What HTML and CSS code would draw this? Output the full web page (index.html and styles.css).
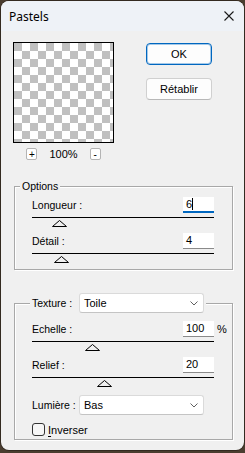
FILE: index.html
```html
<!DOCTYPE html>
<html lang="fr">
<head>
<meta charset="utf-8">
<title>Pastels</title>
<link rel="stylesheet" href="styles.css">
</head>
<body>
<div class="window">
  <div class="titlebar">
    <span class="title">Pastels</span>
    <svg class="close" width="10" height="10" viewBox="0 0 10 10"><path d="M0.5 0.5L9.5 9.5M9.5 0.5L0.5 9.5" stroke="#1a1a1a" stroke-width="1.1" fill="none"/></svg>
  </div>
  <div class="content">
    <div class="top">
      <div class="preview-col">
        <div class="preview"></div>
        <div class="zoom-row">
          <span class="zbtn">+</span>
          <span class="zoom-val">100%</span>
          <span class="zbtn">-</span>
        </div>
      </div>
      <div class="btn-col">
        <button class="btn btn-default">OK</button>
        <button class="btn">Rétablir</button>
      </div>
    </div>

    <fieldset class="group group-options">
      <legend class="legend-text">Options</legend>
      <div class="param">
        <div class="param-row"><span class="param-label">Longueur :</span><div class="field focused">6<span class="caret"></span></div></div>
        <div class="track"></div>
        <svg class="thumb" style="margin-left:20px" width="15" height="7" viewBox="0 0 15 7"><path d="M0.5 6.5L7.5 0.5L14.5 6.5Z" fill="none" stroke="#000"/></svg>
      </div>
      <div class="param">
        <div class="param-row"><span class="param-label">Détail :</span><div class="field">4</div></div>
        <div class="track"></div>
        <svg class="thumb" style="margin-left:22px" width="15" height="7" viewBox="0 0 15 7"><path d="M0.5 6.5L7.5 0.5L14.5 6.5Z" fill="none" stroke="#000"/></svg>
      </div>
    </fieldset>

    <fieldset class="group group-texture">
      <legend class="legend-select">
        <span class="combo-label">Texture :</span>
        <div class="select"><span>Toile</span><svg width="8" height="5" viewBox="0 0 8 5"><path d="M0.5 0.5L4 4L7.5 0.5" fill="none" stroke="#606060"/></svg></div>
      </legend>
      <div class="param">
        <div class="param-row"><span class="param-label">Echelle :</span><div class="field">100</div><span class="pct">%</span></div>
        <div class="track"></div>
        <svg class="thumb" style="margin-left:53px" width="15" height="7" viewBox="0 0 15 7"><path d="M0.5 6.5L7.5 0.5L14.5 6.5Z" fill="none" stroke="#000"/></svg>
      </div>
      <div class="param">
        <div class="param-row"><span class="param-label">Relief :</span><div class="field">20</div></div>
        <div class="track"></div>
        <svg class="thumb" style="margin-left:65px" width="15" height="7" viewBox="0 0 15 7"><path d="M0.5 6.5L7.5 0.5L14.5 6.5Z" fill="none" stroke="#000"/></svg>
      </div>
      <div class="combo-row">
        <span class="combo-label">Lumière :</span>
        <div class="select"><span>Bas</span><svg width="8" height="5" viewBox="0 0 8 5"><path d="M0.5 0.5L4 4L7.5 0.5" fill="none" stroke="#606060"/></svg></div>
      </div>
      <div class="check-row">
        <span class="check"></span>
        <span class="check-label"><u>I</u>nverser</span>
      </div>
    </fieldset>
  </div>
</div>
</body>
</html>
```
FILE: styles.css
```css
* { box-sizing: border-box; }
html, body { margin: 0; padding: 0; }
body {
  width: 245px;
  height: 453px;
  overflow: hidden;
  background: #4a3d2f;
  font-family: "Liberation Sans", Arial, sans-serif;
  font-size: 10.5px;
  color: #000;
}
.window {
  margin: 1px 0 0 1px;
  width: 243px;
  height: 449px;
  background: #f0f0f0;
  border-radius: 8px;
  overflow: hidden;
  box-shadow: 0 0 0 1px rgba(0,0,0,0.3);
}
.titlebar {
  height: 30px;
  background: #eef2f7;
  display: flex;
  align-items: center;
  justify-content: space-between;
  padding: 0 10px 0 8px;
}
.title {
  font-family: "Noto Sans", "Open Sans", sans-serif;
  font-size: 12px;
  color: #000;
}
.close { display: block; }
.content { padding: 11px 11px 0 12px; }
.top { display: flex; }
.preview {
  width: 101px;
  height: 101px;
  border: 1px solid #000;
  background: repeating-conic-gradient(#fff 0 25%, #c0c0c0 0 50%) 0 0 / 16px 16px;
}
.zoom-row {
  margin-top: 5px;
  height: 12px;
  display: flex;
  align-items: center;
  justify-content: center;
  gap: 12px;
}
.zbtn {
  width: 11px;
  height: 12px;
  border: 1px solid #b4b4b4;
  border-radius: 2px;
  background: #fff;
  font-size: 10px;
  line-height: 9px;
  display: flex;
  align-items: center;
  justify-content: center;
}
.zoom-val { font-size: 11px; line-height: 12px; }
.btn-col {
  margin-left: 32px;
  padding-top: 1px;
  display: flex;
  flex-direction: column;
  gap: 13px;
}
.btn {
  width: 66px;
  height: 22px;
  padding: 0;
  background: #fdfdfd;
  border: 1px solid #d0d0d0;
  border-bottom-color: #b8b8b8;
  border-radius: 4px;
  font-family: "Liberation Sans", Arial, sans-serif;
  font-size: 11px;
  color: #000;
}
.btn-default {
  border: 1px solid #0067c0;
  box-shadow: inset 0 0 0 1px rgba(0,103,192,0.35);
}
.group {
  margin: 20px 0 0 1px;
  width: 219px;
  border: 1px solid #a8a8a8;
  box-shadow: inset 1px 1px 0 #fff, 1px 1px 0 #fff;
  min-width: 0;
}
.group-options { padding: 4px 18px 6px 17px; }
.group-texture { margin-top: 23px; padding: 8px 18px 3px 17px; }
.legend-text {
  margin-left: -12px;
  padding: 0 2px;
  line-height: 13px;
  height: 13px;
  background: #f0f0f0;
}
.legend-select {
  margin-left: -2px;
  padding: 0 2px;
  display: flex;
  align-items: center;
  background: #f0f0f0;
}
.combo-label { width: 47px; flex: none; }
.select {
  width: 125px;
  height: 20px;
  background: #fff;
  border: 1px solid #dadada;
  border-bottom-color: #c4c4c4;
  border-radius: 3px;
  display: flex;
  align-items: center;
  justify-content: space-between;
  padding: 0 5px 0 4px;
  font-size: 11px;
}
.select svg { display: block; }
.param + .param { margin-top: 6px; }
.param-row {
  height: 16px;
  display: flex;
  align-items: center;
}
.param-label { flex: 1; }
.field {
  width: 31px;
  height: 16px;
  background: #fff;
  border-bottom: 1px solid #8a8a8a;
  padding: 0 3px;
  line-height: 15px;
  font-size: 11px;
  display: flex;
  align-items: center;
}
.field.focused { border-bottom: 2px solid #0067c0; line-height: 14px; }
.caret {
  display: inline-block;
  width: 1px;
  height: 12px;
  background: #000;
}
.pct { width: 0; margin-left: 3px; margin-right: -3px; white-space: nowrap; font-size: 11px; }
.track { margin-top: 4px; border-top: 1px solid #000; }
.thumb { display: block; margin-top: 2px; }
.combo-row {
  margin-top: 8px;
  display: flex;
  align-items: center;
}
.check-row {
  margin-top: 8px;
  height: 13px;
  display: flex;
  align-items: center;
}
.check {
  width: 13px;
  height: 13px;
  border: 1px solid #333;
  border-radius: 3px;
  background: #f6f6f6;
}
.check-label { margin-left: 3px; font-size: 11px; }
.check-label u { text-decoration-thickness: 1px; text-underline-offset: 2px; }
```
